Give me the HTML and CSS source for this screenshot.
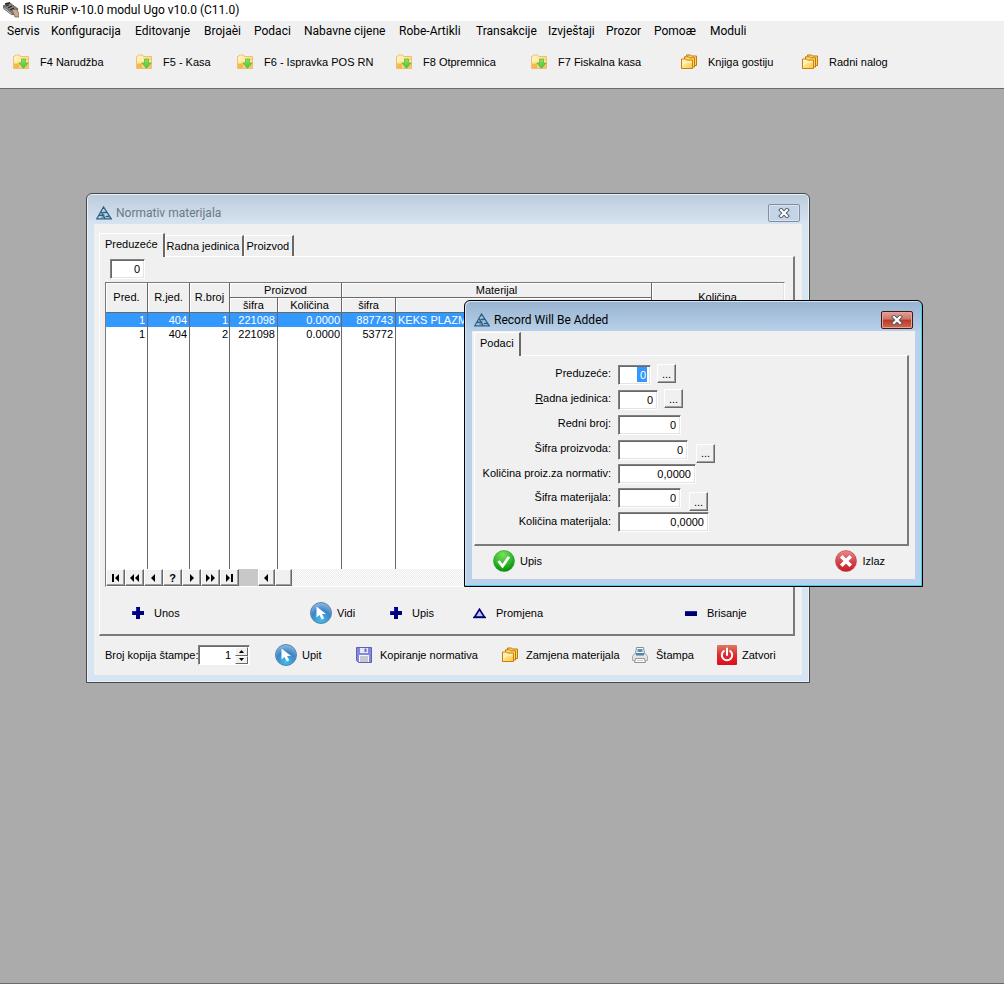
FILE: index.html
```html
<!DOCTYPE html>
<html lang="bs">
<head>
<meta charset="utf-8">
<title>IS RuRiP v-10.0 modul Ugo v10.0 (C11.0)</title>
<link rel="stylesheet" href="styles.css">
</head>
<body>
<svg class="defs" aria-hidden="true">
  <defs>
    <linearGradient id="g-folder" x1="0" y1="0" x2="1" y2="1"><stop offset="0" stop-color="#fffbe0"/><stop offset=".5" stop-color="#ffe27a"/><stop offset="1" stop-color="#f8c050"/></linearGradient>
    <linearGradient id="g-arrow" x1="0" y1="0" x2="0" y2="1"><stop offset="0" stop-color="#8fe35c"/><stop offset="1" stop-color="#3fc83a"/></linearGradient>
    <radialGradient id="g-blue" cx=".5" cy=".85" r=".8"><stop offset="0" stop-color="#3fc0e8"/><stop offset=".6" stop-color="#3b86c8"/><stop offset="1" stop-color="#8ab4dc"/></radialGradient>
    <radialGradient id="g-green" cx=".45" cy=".2" r=".8"><stop offset="0" stop-color="#7be05c"/><stop offset=".6" stop-color="#2fb728"/><stop offset="1" stop-color="#078a0c"/></radialGradient>
    <linearGradient id="g-red" x1="0" y1="0" x2="0" y2="1"><stop offset="0" stop-color="#e98a8c"/><stop offset=".5" stop-color="#d8474d"/><stop offset="1" stop-color="#c21f27"/></linearGradient>
    <linearGradient id="g-power" x1="0" y1="0" x2="0" y2="1"><stop offset="0" stop-color="#dd7b62"/><stop offset=".5" stop-color="#dc2c30"/><stop offset="1" stop-color="#e00c1c"/></linearGradient>
  </defs>
  <symbol id="i-app" viewBox="0 0 16 16">
    <path d="M0 4 7 1l8 6-4 6z" fill="#8c8984" stroke="#444" stroke-width=".8"/>
    <path d="M0 4 1 7l8 6 1-1z" fill="#d0cdc7" stroke="#555" stroke-width=".8"/>
    <path d="M3 4l3-1M5 6l4-2M7 8l4-2" stroke="#222" stroke-width="1.3"/>
    <path d="M9 8l4-1 3 4v4h-4z" fill="#c9a98b" stroke="#6b5545" stroke-width=".7"/>
    <path d="M2 2 7 .8" stroke="#222" stroke-width="1.4"/>
  </symbol>
  <symbol id="i-down" viewBox="0 0 16 16">
    <path d="M.5 14.5v-12h1l1-1.500h4l1 1.500h8v12z" fill="url(#g-folder)" stroke="#f0bd72"/>
    <path d="M1 6h6l1 1.500h7" fill="none" stroke="#fff6d8"/>
    <path d="M1 9.500h5v4.500H1z" fill="#eda83c" opacity=".7"/>
    <path d="M8.500 5h4v4h2.700L10.500 14.300 5.800 9h2.700z" fill="url(#g-arrow)" stroke="#5fae48" stroke-width=".7"/>
  </symbol>
  <symbol id="i-folders" viewBox="0 0 16 16">
    <path d="M5.500 2.500V1h4l1 1h5v9.500H14" fill="#ffd45a" stroke="#c07a0a"/>
    <path d="M3.500 5V2.800h4l1 1h5V13H12" fill="#ffdd6c" stroke="#c07a0a"/>
    <path d="M.5 14.500V5h4l1 1h6v8.500z" fill="url(#g-folder)" stroke="#c87f0c"/>
    <path d="M1 11l4-3h6" fill="none" stroke="#fff" opacity=".7"/>
  </symbol>
  <symbol id="i-tri" viewBox="0 0 16 14">
    <path d="M7.500 1 .8 12.800h14.400zM5 5.500l4 7M10.500 6.500 6.500 6.500M3 9.500l5.500-.5M9.500 10.500h4" fill="none" stroke="#2c5f85" stroke-width="1.300"/>
    <path d="M4.500 12 7 8.500 9 12z" fill="#2c5f85" opacity=".5"/>
  </symbol>
  <symbol id="i-x" viewBox="0 0 12 10">
    <path d="M3 2 9 8M9 2 3 8" stroke="#4d5a6b" stroke-width="4" stroke-linecap="square"/>
    <path d="M3 2 9 8M9 2 3 8" stroke="#fff" stroke-width="2.200" stroke-linecap="square"/>
  </symbol>
  <symbol id="i-plus" viewBox="0 0 12 12"><path d="M4 0h4v4h4v4H8v4H4V8H0V4h4z" fill="#00007c"/><path d="M4.500 4V.5M.5 7.500v-3H4" stroke="#2222c4" fill="none"/></symbol>
  <symbol id="i-minus" viewBox="0 0 12 12"><path d="M0 4h12v5H0z" fill="#00006c"/><path d="M0 4.500h12" stroke="#2222b4"/></symbol>
  <symbol id="i-delta" viewBox="0 0 13 12"><path d="M6.500 2.300 1.600 10h9.800z" fill="#c3c5ee" stroke="#00007c" stroke-width="1.600"/><path d="M0 10.500h13" stroke="#00006c" stroke-width="1.400"/></symbol>
  <symbol id="i-cursor" viewBox="0 0 22 22">
    <circle cx="11" cy="11" r="10.500" fill="url(#g-blue)" stroke="#5a83b4"/>
    <path d="M6.500 4.500v11l3-2.500 2.200 4.500 2.500-1.200-2.200-4.300h4z" fill="#fff"/>
  </symbol>
  <symbol id="i-ok" viewBox="0 0 22 22">
    <circle cx="11" cy="11" r="10.500" fill="url(#g-green)" stroke="#239d24" stroke-width=".6"/>
    <path d="M5.500 11l4 5.200 6.500-9.500" fill="none" stroke="#fff" stroke-width="2.800"/>
  </symbol>
  <symbol id="i-cancel" viewBox="0 0 22 22">
    <circle cx="11" cy="11" r="10.500" fill="url(#g-red)" stroke="#b93a40" stroke-width=".6"/>
    <path d="M7.500 7.500l7 7M14.500 7.500l-7 7" stroke="#fff" stroke-width="3.600" stroke-linecap="square"/>
  </symbol>
  <symbol id="i-floppy" viewBox="0 0 16 16">
    <path d="M.5.5h15v15h-13l-2-2z" fill="#8587dc" stroke="#6062b8"/>
    <path d="M4 1h8v5H4z" fill="#e6e7fa"/><path d="M8.500 1.500h2v3.500h-2z" fill="#6a6cc4"/>
    <path d="M3 8h10v7H3z" fill="#f4f4fc"/><path d="M4 10h8M4 12h8M4 14h8" stroke="#9a9ca8"/>
  </symbol>
  <symbol id="i-printer" viewBox="0 0 16 16">
    <path d="M4.500.5h7l1 6h-9z" fill="#f5f8fb" stroke="#7e8f9c"/><path d="M5.500 2h5v3h-5z" fill="#5c93bd"/>
    <path d="M2.500 6.500h11l2 3v4H.5v-4z" fill="#e2e6e9" stroke="#a3abb1"/>
    <path d="M4 6h8v2.500H4z" fill="#5a8099"/><path d="M3.500 11.500h9l1 4h-11z" fill="#fff" stroke="#8d959b"/><path d="M5 13.500h6" stroke="#c9cfd3"/>
  </symbol>
  <symbol id="i-power" viewBox="0 0 20 20">
    <rect width="20" height="20" rx="1" fill="url(#g-power)"/>
    <path d="M6.800 6a5.200 5.200 0 1 0 6.400 0M10 3.500V10" fill="none" stroke="#fff" stroke-width="2" stroke-linecap="round"/>
  </symbol>
  <symbol id="n-first" viewBox="0 0 12 8"><path d="M2 0h2v8H2zM9 0v8L5 4z"/></symbol>
  <symbol id="n-prevp" viewBox="0 0 12 8"><path d="M5 0v8L1 4zM10 0v8L6 4z"/></symbol>
  <symbol id="n-prev" viewBox="0 0 12 8"><path d="M7 0v8L3 4z"/></symbol>
  <symbol id="n-next" viewBox="0 0 12 8"><path d="M4 0v8l4-4z"/></symbol>
  <symbol id="n-nextp" viewBox="0 0 12 8"><path d="M1 0v8l4-4zM6 0v8l4-4z"/></symbol>
  <symbol id="n-last" viewBox="0 0 12 8"><path d="M2 0v8l4-4zM7 0h2v8H7z"/></symbol>
</svg>

<header class="app-title"><svg class="s16"><use href="#i-app"/></svg><span>IS RuRiP v-10.0 modul Ugo v10.0 (C11.0)</span></header>
<nav class="menu">
  <a href="#">Servis</a><a href="#">Konfiguracija</a><a href="#">Editovanje</a><a href="#">Brojaèi</a><a href="#">Podaci</a><a href="#">Nabavne cijene</a><a href="#">Robe-Artikli</a><a href="#">Transakcije</a><a href="#">Izvještaji</a><a href="#">Prozor</a><a href="#">Pomoæ</a><a href="#">Moduli</a>
</nav>
<div class="toolbar">
  <button class="tool"><svg class="s16"><use href="#i-down"/></svg>F4 Narudžba</button>
  <button class="tool"><svg class="s16"><use href="#i-down"/></svg>F5 - Kasa</button>
  <button class="tool"><svg class="s16"><use href="#i-down"/></svg>F6 - Ispravka POS RN</button>
  <button class="tool"><svg class="s16"><use href="#i-down"/></svg>F8 Otpremnica</button>
  <button class="tool"><svg class="s16"><use href="#i-down"/></svg>F7 Fiskalna kasa</button>
  <button class="tool"><svg class="s16"><use href="#i-folders"/></svg>Knjiga gostiju</button>
  <button class="tool"><svg class="s16"><use href="#i-folders"/></svg>Radni nalog</button>
</div>

<main class="desktop">
  <section class="window window-main">
    <div class="caption"><svg class="tri"><use href="#i-tri"/></svg><h2>Normativ materijala</h2><button class="close" aria-label="Zatvori prozor"><svg><use href="#i-x"/></svg></button></div>
    <div class="client">
      <div class="tabs">
        <button class="tab active">Preduzeće</button><button class="tab">Radna jedinica</button><button class="tab">Proizvod</button>
      </div>
      <div class="sheet">
        <input class="field locator" value="0" aria-label="Preduzeće">
        <div class="browse">
          <table>
            <colgroup><col class="c42"><col class="c42"><col class="c40"><col class="c48"><col class="c64"><col class="c54"><col class="c256"><col></colgroup>
            <thead>
              <tr><th rowspan="2">Pred.</th><th rowspan="2">R.jed.</th><th rowspan="2">R.broj</th><th colspan="2">Proizvod</th><th colspan="2">Materijal</th><th rowspan="2">Količina</th></tr>
              <tr><th>šifra</th><th>Količina</th><th>šifra</th><th></th></tr>
            </thead>
            <tbody>
              <tr class="selected"><td>1</td><td class="pad">404</td><td>1</td><td>221098</td><td>0.0000</td><td>887743</td><td class="name">KEKS PLAZMA</td><td></td></tr>
              <tr><td>1</td><td class="pad">404</td><td>2</td><td>221098</td><td>0.0000</td><td>53772</td><td></td><td></td></tr>
              <tr class="rest"><td></td><td></td><td></td><td></td><td></td><td></td><td></td><td></td></tr>
            </tbody>
          </table>
          <div class="scroll">
            <button aria-label="Prvi"><svg><use href="#n-first"/></svg></button><button aria-label="Strana nazad"><svg><use href="#n-prevp"/></svg></button><button aria-label="Prethodni"><svg><use href="#n-prev"/></svg></button><button>?</button><button aria-label="Sljedeći"><svg><use href="#n-next"/></svg></button><button aria-label="Strana naprijed"><svg><use href="#n-nextp"/></svg></button><button aria-label="Posljednji"><svg><use href="#n-last"/></svg></button>
            <span class="gapbox"></span>
            <button class="narrow" aria-label="Lijevo"><svg><use href="#n-prev"/></svg></button><span class="thumb"></span>
          </div>
        </div>
        <div class="actions">
          <button class="act"><svg class="s12"><use href="#i-plus"/></svg>Unos</button>
          <button class="act tight"><svg class="s22"><use href="#i-cursor"/></svg>Vidi</button>
          <button class="act"><svg class="s12"><use href="#i-plus"/></svg>Upis</button>
          <button class="act"><svg class="s13"><use href="#i-delta"/></svg>Promjena</button>
          <button class="act"><svg class="s12"><use href="#i-minus"/></svg>Brisanje</button>
        </div>
      </div>
      <div class="bottom">
        <div class="copies"><label for="copies">Broj kopija štampe:</label><div class="spin"><input id="copies" value="1"><div class="spin-btns"><button aria-label="Više"><svg viewBox="0 0 5 3"><path d="M0 3h5L2.500 0z"/></svg></button><button aria-label="Manje"><svg viewBox="0 0 5 3"><path d="M0 0h5L2.500 3z"/></svg></button></div></div></div>
        <button class="act tight"><svg class="s22"><use href="#i-cursor"/></svg>Upit</button>
        <button class="act mid"><svg class="s16"><use href="#i-floppy"/></svg>Kopiranje normativa</button>
        <button class="act mid"><svg class="s16"><use href="#i-folders"/></svg>Zamjena materijala</button>
        <button class="act mid"><svg class="s16"><use href="#i-printer"/></svg>Štampa</button>
        <button class="act tight"><svg class="s20"><use href="#i-power"/></svg>Zatvori</button>
      </div>
    </div>
  </section>

  <section class="window window-dialog">
    <div class="caption"><svg class="tri"><use href="#i-tri"/></svg><h2>Record Will Be Added</h2><button class="close" aria-label="Zatvori dijalog"><svg><use href="#i-x"/></svg></button></div>
    <div class="client">
      <div class="tabs"><button class="tab active">Podaci</button></div>
      <div class="sheet">
        <form class="form">
          <label for="f1">Preduzeće:</label><div class="cell"><input class="field w33 marked" id="f1" value="0"><button type="button" class="pick">...</button></div>
          <label for="f2"><u>R</u>adna jedinica:</label><div class="cell"><input class="field w40" id="f2" value="0"><button type="button" class="pick">...</button></div>
          <label for="f3">Redni broj:</label><div class="cell"><input class="field w63" id="f3" value="0"></div>
          <label for="f4">Šifra proizvoda:</label><div class="cell"><input class="field w70" id="f4" value="0"><button type="button" class="pick low">...</button></div>
          <label for="f5">Količina proiz.za normativ:</label><div class="cell"><input class="field w78" id="f5" value="0,0000"></div>
          <label for="f6">Šifra materijala:</label><div class="cell"><input class="field w63" id="f6" value="0"><button type="button" class="pick low">...</button></div>
          <label for="f7">Količina materijala:</label><div class="cell"><input class="field w91" id="f7" value="0,0000"></div>
        </form>
      </div>
      <div class="dialog-foot">
        <button class="act tight"><svg class="s22"><use href="#i-ok"/></svg>Upis</button>
        <button class="act tight"><svg class="s22"><use href="#i-cancel"/></svg>Izlaz</button>
      </div>
    </div>
  </section>
</main>
</body>
</html>
```

FILE: styles.css
```css
* { box-sizing: border-box; }
body {
  margin: 0;
  min-height: 100vh;
  display: flex;
  flex-direction: column;
  background: #f0f0f0;
  color: #000;
  font: 11px/14px "Liberation Sans", Arial, sans-serif;
}
.defs { position: absolute; width: 0; height: 0; }
button { margin: 0; padding: 0; border: 0; background: none; color: inherit; font: inherit; }
input { font: inherit; color: inherit; }
svg { flex: none; display: block; }
.s12 { width: 12px; height: 12px; }
.s13 { width: 13px; height: 12px; }
.s16 { width: 16px; height: 16px; }
.s20 { width: 20px; height: 20px; }
.s22 { width: 22px; height: 22px; }

.app-title, .menu, .caption h2 { font-family: Roboto, "Open Sans", sans-serif; font-size: 12px; }
.app-title {
  display: flex;
  align-items: center;
  gap: 4px;
  height: 21px;
  padding: 0 3px 2px;
  background: #fff;
}
.menu {
  display: grid;
  grid-template-columns: 44px 84px 69px 50px 50px 95px 77px 72px 58px 48px 56px 1fr;
  align-items: center;
  height: 20px;
  padding-left: 7px;
}
.menu a { color: #000; text-decoration: none; white-space: nowrap; }
.toolbar {
  display: grid;
  grid-template-columns: 123px 101px 159px 135px 150px 121px 1fr;
  height: 47px;
  padding: 0 0 5px 13px;
}
.tool { display: flex; align-items: center; gap: 11px; white-space: nowrap; }

.desktop {
  position: relative;
  flex: 1;
  background: #ababab;
  border-top: 1px solid #696969;
  border-bottom: 1px solid #696969;
}
.window {
  position: absolute;
  display: flex;
  flex-direction: column;
  border: 1px solid #45494e;
  border-radius: 6px 6px 0 0;
  padding: 0 7px 7px;
}
.window-main {
  left: 86px;
  top: 104px;
  width: 724px;
  background: linear-gradient(#bccbdb, #d7e4f1 31px);
  box-shadow: inset 0 0 0 1px #e9f1f9;
}
.window-dialog {
  left: 464px;
  top: 211px;
  width: 459px;
  border-color: #000;
  background: linear-gradient(#98b3d1, #b9d1ea 31px);
  box-shadow: inset -1px -1px 0 #42cfee, inset 1px 1px 0 #d4e4f5;
}
.caption { display: flex; align-items: center; height: 30px; padding: 7px 2px 0 2px; }
.tri { width: 16px; height: 14px; margin-right: 4px; }
.caption h2 { margin: 0; flex: 1; font-weight: 400; }
.window-main h2 { color: #6c7885; }
.close {
  display: grid;
  place-items: center;
  width: 32px;
  height: 18px;
  border: 1px solid #7f8fa3;
  border-radius: 2px;
  background: #c5d4e4;
  box-shadow: inset 0 0 0 1px #d9e4ef;
}
.close svg { width: 12px; height: 10px; }
.window-dialog .close {
  border-color: #43191c;
  background: linear-gradient(#e2a097, #d07467 45%, #b93824 50%, #d06a50);
  box-shadow: inset 0 0 0 1px #e6a498;
}
.client { background: #f0f0f0; }
.window-main .client { padding: 9px 7px 6px 5px; }
.window-dialog .client { padding: 1px 6px 7px 2px; }

.tabs { display: flex; align-items: flex-end; }
.tab {
  height: 21px;
  padding: 0 3px 0 1px;
  border-top: 1px solid #fff;
  border-left: 1px solid #fff;
  border-right: 2px solid #696969;
  white-space: nowrap;
}
.tab.active { height: 24px; padding: 0 5px 3px; margin-bottom: -1px; background: #f0f0f0; z-index: 1; }
.sheet {
  border: 1px solid #fff;
  border-right: 2px solid #7a7a7a;
  border-bottom: 2px solid #7a7a7a;
}
.window-main .sheet { padding: 2px 8px 0 5px; }

.field {
  height: 20px;
  padding: 0 4px;
  border: 1px solid;
  border-color: #808080 #fff #fff #808080;
  box-shadow: inset 1px 1px 0 #696969, inset -1px -1px 0 #e3e3e3;
  border-radius: 0;
  background: #fff;
  text-align: right;
}
.locator { display: block; width: 35px; margin: 0 0 3px 5px; }

.browse { border: 1px solid #7a7a7a; border-right-color: #fff; border-bottom-color: #fff; }
table { width: 100%; table-layout: fixed; border-collapse: separate; border-spacing: 0; background: #fff; }
.c40 { width: 40px; } .c42 { width: 42px; } .c48 { width: 48px; } .c54 { width: 54px; } .c64 { width: 64px; } .c256 { width: 256px; }
th {
  height: 15px;
  padding: 0;
  font-weight: 400;
  line-height: 13px;
  background: #f0f0f0;
  border-right: 1px solid #696969;
  border-bottom: 1px solid #696969;
  box-shadow: inset 1px 1px 0 #fff;
}
td { height: 14px; padding: 0 2px; line-height: 14px; text-align: right; border-right: 1px solid #696969; white-space: nowrap; overflow: hidden; }
td:nth-child(2n) { padding-right: 1px; }
td:first-child, td.pad, td:nth-child(4), td:nth-child(6) { padding-right: 2px; }
td:nth-child(3), td:nth-child(5) { padding-right: 1px; }
td.name { text-align: left; }
th:last-child, td:last-child { border-right-color: #e3e3e3; }
thead tr:nth-child(2) th:last-child { border-right-color: #696969; }
.selected td { background: #3399ff; color: #fff; }
.rest td { height: 228px; }
.scroll {
  display: flex;
  height: 17px;
  background: repeating-conic-gradient(#fff 0 25%, #eaeaea 0 50%) 0 0 / 2px 2px;
}
.scroll button, .thumb {
  display: grid;
  place-items: center;
  width: 19px;
  background: #f0f0f0;
  border: 1px solid;
  border-color: #fff #696969 #696969 #fff;
  box-shadow: inset -1px -1px 0 #a0a0a0;
  font-weight: 700;
}
.scroll svg { width: 12px; height: 8px; }
.gapbox { width: 19px; background: #c8c8c8; }
.scroll .narrow, .scroll .thumb { width: 17px; }

.actions {
  display: grid;
  grid-template-columns: 178px 80px 83px 212px 1fr;
  height: 47px;
  padding: 4px 0 0 27px;
}
.act { display: flex; align-items: center; gap: 10px; white-space: nowrap; }
.mid { gap: 8px; }
.tight { gap: 5px; }
.bottom {
  display: grid;
  grid-template-columns: 170px 81px 146px 130px 85px 1fr;
  align-items: center;
  height: 33px;
  padding: 5px 0 0 6px;
}
.copies { display: flex; align-items: center; }
.copies label { width: 93px; white-space: nowrap; }
.spin {
  display: flex;
  width: 52px;
  height: 20px;
  border: 1px solid;
  border-color: #808080 #fff #fff #808080;
  box-shadow: inset 1px 1px 0 #696969;
  background: #fff;
}
.spin input { flex: 1; min-width: 0; padding: 0 4px 0 0; border: 0; background: none; text-align: right; }
.spin-btns { display: grid; grid-template-rows: 1fr 1fr; width: 14px; padding: 1px 1px 0 0; }
.spin-btns button { display: grid; place-items: center; background: #f0f0f0; border: 1px solid; border-color: #fff #696969 #696969 #fff; }
.spin-btns svg { width: 5px; height: 3px; }

.form {
  display: grid;
  grid-template-columns: 136px 1fr;
  grid-template-rows: repeat(4, 25px) repeat(3, 24px);
  column-gap: 7px;
  align-items: center;
  padding: 6px 0 10px;
}
.form label { text-align: right; padding-bottom: 3px; white-space: nowrap; }
.cell { display: flex; align-items: center; }
.w33 { width: 33px; } .w40 { width: 40px; } .w63 { width: 63px; } .w70 { width: 70px; } .w78 { width: 78px; } .w91 { width: 91px; }
.marked {
  color: #fff;
  background: linear-gradient(#3399ff, #3399ff) right 3px center / 10px 15px no-repeat, #fff;
}
.pick {
  width: 19px;
  height: 19px;
  margin: 0 0 2px 6px;
  background: #f0f0f0;
  border: 1px solid;
  border-color: #fff #696969 #696969 #fff;
  box-shadow: inset -1px -1px 0 #a0a0a0;
}
.pick.low { margin: 7px 0 0 8px; }
.dialog-foot { display: flex; justify-content: space-between; align-items: center; height: 26px; padding: 4px 24px 0 19px; }
```
